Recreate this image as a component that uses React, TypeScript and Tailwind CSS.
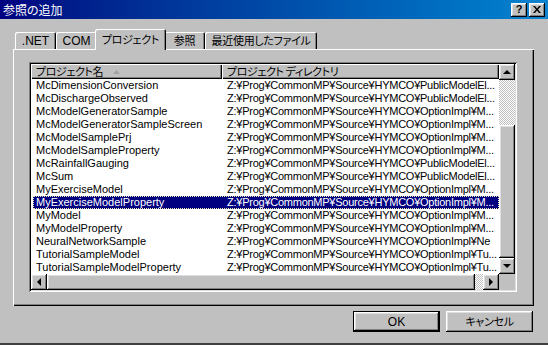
const rows: [string, string][] = [
  ['McDimensionConversion', 'Z:¥Prog¥CommonMP¥Source¥HYMCO¥PublicModelEl...'],
  ['McDischargeObserved', 'Z:¥Prog¥CommonMP¥Source¥HYMCO¥PublicModelEl...'],
  ['McModelGeneratorSample', 'Z:¥Prog¥CommonMP¥Source¥HYMCO¥OptionImpl¥M...'],
  ['McModelGeneratorSampleScreen', 'Z:¥Prog¥CommonMP¥Source¥HYMCO¥OptionImpl¥M...'],
  ['McModelSamplePrj', 'Z:¥Prog¥CommonMP¥Source¥HYMCO¥OptionImpl¥M...'],
  ['McModelSampleProperty', 'Z:¥Prog¥CommonMP¥Source¥HYMCO¥OptionImpl¥M...'],
  ['McRainfallGauging', 'Z:¥Prog¥CommonMP¥Source¥HYMCO¥PublicModelEl...'],
  ['McSum', 'Z:¥Prog¥CommonMP¥Source¥HYMCO¥PublicModelEl...'],
  ['MyExerciseModel', 'Z:¥Prog¥CommonMP¥Source¥HYMCO¥OptionImpl¥M...'],
  ['MyExerciseModelProperty', 'Z:¥Prog¥CommonMP¥Source¥HYMCO¥OptionImpl¥M...'],
  ['MyModel', 'Z:¥Prog¥CommonMP¥Source¥HYMCO¥OptionImpl¥M...'],
  ['MyModelProperty', 'Z:¥Prog¥CommonMP¥Source¥HYMCO¥OptionImpl¥M...'],
  ['NeuralNetworkSample', 'Z:¥Prog¥CommonMP¥Source¥HYMCO¥OptionImpl¥Ne'],
  ['TutorialSampleModel', 'Z:¥Prog¥CommonMP¥Source¥HYMCO¥OptionImpl¥Tu...'],
  ['TutorialSampleModelProperty', 'Z:¥Prog¥CommonMP¥Source¥HYMCO¥OptionImpl¥Tu...'],
];

const SELECTED = 9;

const raised =
  'bg-[#c0c0c0] shadow-[inset_-1px_-1px_#000,inset_1px_1px_#fff,inset_-2px_-2px_#808080,inset_2px_2px_#dfdfdf]';
const jp = "font-['Noto_Sans_CJK_JP',sans-serif] [font-feature-settings:'palt'] leading-none";
const latin = "font-['Liberation_Sans','Noto_Sans_CJK_JP',sans-serif]";
const hatch =
  'bg-[image:repeating-conic-gradient(#c0c0c0_0_25%,#ffffff_0_50%)] bg-[length:2px_2px]';

const Arrow = ({ dir }: { dir: 'up' | 'down' | 'left' | 'right' }) => {
  const pts = {
    up: '4,1 0,5 8,5',
    down: '0,1 8,1 4,5',
    left: '5,0 5,8 1,4',
    right: '1,0 1,8 5,4',
  }[dir];
  const vertical = dir === 'up' || dir === 'down';
  return (
    <svg width={vertical ? 8 : 6} height={vertical ? 6 : 8} viewBox={vertical ? '0 0 8 6' : '0 0 6 8'}>
      <polygon points={pts} fill="#000" />
    </svg>
  );
};

const ScrollBtn = ({ dir }: { dir: 'up' | 'down' | 'left' | 'right' }) => (
  <div className={`w-[16px] h-[16px] shrink-0 flex items-center justify-center ${raised}`}>
    <Arrow dir={dir} />
  </div>
);

const Tab = ({ label, w, active }: { label: string; w: string; active?: boolean }) => (
  <div
    className={`${w} ${
      active
        ? 'h-[21px] -mx-[2px] -mb-[1px] relative z-10 pt-[5px]'
        : 'h-[17px] pt-[3px]'
    } bg-[#c0c0c0] rounded-t-[2px] shadow-[inset_1px_1px_#fff,inset_-1px_0_#000,inset_-2px_0_#808080] flex justify-center whitespace-nowrap text-black`}
  >
    {label === '.NET' || label === 'COM' ? (
      <span className={`${latin} text-[12px] leading-none`}>{label}</span>
    ) : (
      <span className={`${jp} text-[11px] tracking-[-0.3px]`}>{label}</span>
    )}
  </div>
);

export default function App() {
  return (
    <div className="w-[548px] h-[345px] bg-[#c0c0c0] flex flex-col overflow-hidden border-b-[2px] border-b-[#404040]">
      <div className="h-[19px] shrink-0 flex items-center justify-between pl-[3px] pr-[3px] bg-linear-to-r from-[#000080] to-[#1084d0]">
        <span className={`text-white text-[12px] ${jp}`}>参照の追加</span>
        <div className="flex gap-[2px]">
          <div className={`w-[16px] h-[14px] flex items-center justify-center text-[11px] font-bold leading-none ${latin} ${raised}`}>
            ?
          </div>
          <div className={`w-[16px] h-[14px] flex items-center justify-center ${raised}`}>
            <svg width="8" height="7" viewBox="0 0 8 7">
              <path d="M0 0h2l2 2.5L6 0h2L5 3.5 8 7H6L4 4.5 2 7H0l3-3.5z" fill="#000" />
            </svg>
          </div>
        </div>
      </div>

      <div className="pl-[13px] pr-[14px]">
        <div className="mt-[10px] pl-[2px] h-[20px] flex items-end">
          <Tab label=".NET" w="w-[41px]" />
          <Tab label="COM" w="w-[41px]" />
          <Tab label="プロジェクト" w="w-[71px]" active />
          <Tab label="参照" w="w-[41px]" />
          <Tab label="最近使用したファイル" w="w-[112px]" />
        </div>

        <div className="h-[257px] pt-[13px] pl-[16px] pr-[17px] bg-[#c0c0c0] shadow-[inset_1px_1px_#fff,inset_-1px_-1px_#000,inset_-2px_-2px_#808080]">
          <div className="h-[230px] p-[2px] bg-white shadow-[inset_1px_1px_#808080,inset_-1px_-1px_#fff,inset_2px_2px_#000,inset_-2px_-2px_#dfdfdf]">
            <div className="flex h-[210px]">
              <div className="flex-1 flex flex-col min-w-0">
                <div className="h-[15px] flex shrink-0">
                  <div className="w-[191px] flex items-center gap-[10px] pl-[5px] text-black bg-[#c0c0c0] shadow-[inset_1px_1px_#fff,inset_-1px_-1px_#000,inset_-2px_-2px_#808080]">
                    <span className={`${jp} text-[11px] tracking-[-0.4px]`}>プロジェクト名</span>
                    <svg width="7" height="4" viewBox="0 0 7 4">
                      <polygon points="3.5,0 0,4 7,4" fill="#a0a0a0" />
                    </svg>
                  </div>
                  <div className="flex-1 flex items-center pl-[5px] text-black bg-[#c0c0c0] shadow-[inset_1px_1px_#fff,inset_-1px_-1px_#000,inset_-2px_-2px_#808080]">
                    <span className={`${jp} text-[11px] tracking-[-0.4px]`}>プロジェクト ディレクトリ</span>
                  </div>
                </div>
                <div className="flex flex-col">
                  {rows.map(([name, dir], i) => (
                    <div
                      key={name}
                      className={`h-[13px] ml-[2px] flex items-center text-[11px] leading-none whitespace-nowrap ${latin} ${
                        i === SELECTED
                          ? 'bg-[#000080] text-white outline-1 outline-dotted outline-[#e8e8b0] -outline-offset-1'
                          : 'text-black'
                      }`}
                    >
                      <div className="w-[189px] pl-[3px]">{name}</div>
                      <div className="flex-1 pl-[5px] tracking-[-0.25px]">{dir}</div>
                    </div>
                  ))}
                </div>
              </div>
              <div className="w-[16px] flex flex-col">
                <ScrollBtn dir="up" />
                <div className={`h-[45px] ${hatch}`} />
                <div className={`flex-1 ${raised}`} />
                <ScrollBtn dir="down" />
              </div>
            </div>
            <div className="flex h-[16px]">
              <ScrollBtn dir="left" />
              <div className={`w-[428px] ${raised}`} />
              <div className={`flex-1 ${hatch}`} />
              <ScrollBtn dir="right" />
              <div className="w-[16px] bg-[#c0c0c0]" />
            </div>
          </div>
        </div>

        <div className="mt-[5px] flex justify-end gap-[6px] pr-[1px]">
          <div className="w-[87px] h-[21px] border border-black">
            <div className={`h-full flex items-center justify-center text-[12px] text-black ${latin} ${raised}`}>OK</div>
          </div>
          <div className={`w-[87px] h-[21px] flex items-center justify-center text-[11px] tracking-[-0.3px] text-black ${jp} ${raised}`}>
            キャンセル
          </div>
        </div>
      </div>
    </div>
  );
}
